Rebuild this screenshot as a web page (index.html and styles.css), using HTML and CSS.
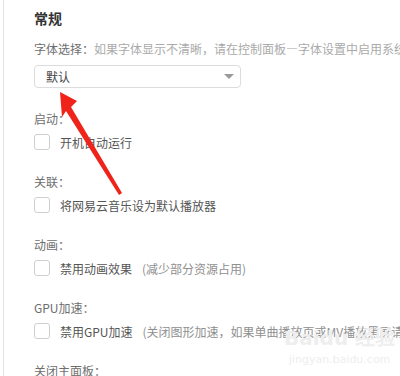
FILE: index.html
```html
<!DOCTYPE html>
<html lang="zh-CN">
<head>
  <meta charset="UTF-8">
  <meta name="viewport" content="width=device-width, initial-scale=1.0">
  <title>设置 - 常规</title>
  <link rel="stylesheet" href="styles.css">
</head>
<body>
  <div class="panel">
    <h2 class="title">常规</h2>

    <!-- 字体 -->
    <div class="field">
      <span class="label">字体选择：</span><span class="hint">如果字体显示不清晰，请在控制面板—字体设置中启用系统ClearType设置</span>
    </div>
    <div class="select">
      <span>默认</span>
      <i class="caret"></i>
    </div>

    <div class="group">
      <div class="label">启动：</div>
      <label class="check"><span class="box"></span>开机自动运行</label>
    </div>

    <div class="group">
      <div class="label">关联：</div>
      <label class="check"><span class="box"></span>将网易云音乐设为默认播放器</label>
    </div>

    <div class="group">
      <div class="label">动画：</div>
      <label class="check"><span class="box"></span>禁用动画效果<span class="note">(减少部分资源占用)</span></label>
    </div>

    <div class="group">
      <div class="label">GPU加速：</div>
      <label class="check"><span class="box"></span>禁用GPU加速<span class="note">(关闭图形加速，如果单曲播放页或MV播放黑屏请尝试勾选此项)</span></label>
    </div>

    <div class="group">
      <div class="label">关闭主面板：</div>
    </div>
  </div>

  <!-- annotation arrow -->
  <svg class="arrow" width="400" height="376" viewBox="0 0 400 376">
    <polygon points="60,92 77,101 71,107 122,193 119,195 66,111 62,117" fill="#f0231b"/>
  </svg>

  <div class="watermark">
    <div class="wm-logo">Bai<span>du</span> 经验</div>
    <div class="wm-url">jingyan.baidu.com</div>
  </div>
</body>
</html>
```

FILE: styles.css
```css
html, body {
  overflow: hidden;
}

body {
  margin: 0;
  background: #fff;
  font-family: "Noto Sans CJK SC", "Microsoft YaHei", sans-serif;
  font-size: 12px;
  color: #555;
}

.panel {
  margin-left: 3px;
  min-height: 376px;
  border-left: 1px solid #e3e3e3;
  padding: 8px 0 0 30px;
  white-space: nowrap;
}

.title {
  margin: 0;
  font-size: 14px;
  line-height: 20px;
  font-weight: bold;
  color: #333;
}

.field {
  margin-top: 13px;
  line-height: 16px;
}

.label {
  color: #6e6e6e;
  line-height: 16px;
}

.hint {
  color: #aaa;
}

.select {
  margin-top: 8px;
  width: 194px;
  height: 21px;
  border: 1px solid #dcdcdc;
  border-radius: 4px;
  display: flex;
  align-items: center;
  justify-content: space-between;
  padding: 0 0 0 11px;
  color: #444;
}

.caret {
  width: 0;
  height: 0;
  border-left: 5px solid transparent;
  border-right: 5px solid transparent;
  border-top: 5px solid #999;
  margin-right: 6px;
}

.group {
  margin-top: 23px;
}

.group + .group {
  margin-top: 24px;
}

.check {
  margin-top: 7px;
  display: flex;
  align-items: center;
  height: 16px;
  color: #555;
}

.box {
  width: 14px;
  height: 14px;
  border: 1px solid #cfcfcf;
  border-radius: 3px;
  margin-right: 10px;
  flex: none;
}

.note {
  margin-left: 10px;
  color: #8f8f8f;
}

.arrow {
  position: absolute;
  left: 0;
  top: 0;
  pointer-events: none;
}

.watermark {
  position: absolute;
  left: 284px;
  top: 327px;
  color: #eeeeee;
  text-align: center;
  font-family: "DejaVu Sans", sans-serif;
  pointer-events: none;
}

.wm-logo {
  font-size: 20px;
  font-weight: bold;
  line-height: 22px;
}

.wm-url {
  font-size: 11px;
  line-height: 14px;
  margin-top: 4px;
}
```
